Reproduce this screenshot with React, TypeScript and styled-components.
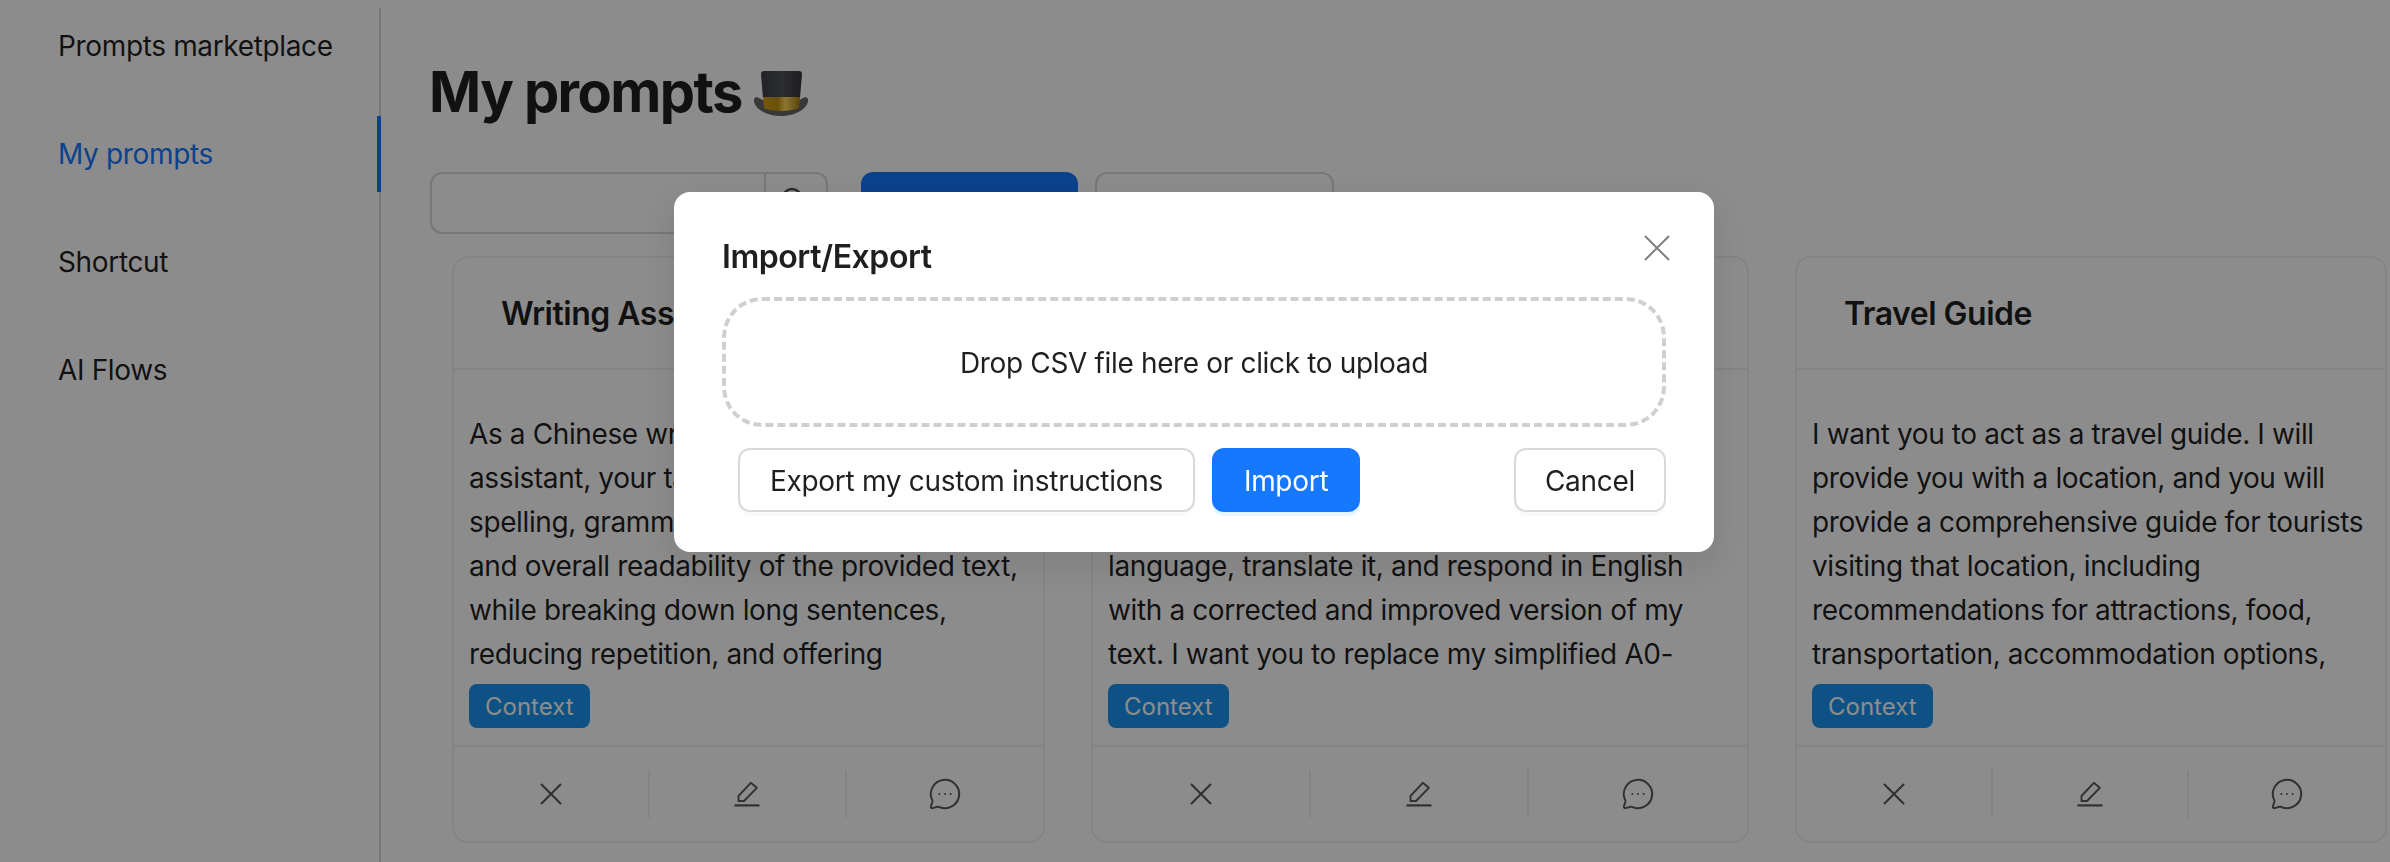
import React from 'react'
import styled, { createGlobalStyle } from 'styled-components'
import { MessageCircleMore } from 'lucide-react'

const GlobalStyle = createGlobalStyle`
  html, body {
    margin: 0;
    padding: 0;
    height: 100%;
    background: #fff;
    overflow: hidden;
  }
  body {
    font-family: Inter, "Noto Sans", sans-serif;
    color: rgba(0, 0, 0, 0.88);
    letter-spacing: -0.35px;
  }
`

const Page = styled.div`
  display: flex;
  width: 2390px;
  height: 862px;
  overflow: hidden;
`

const Sidebar = styled.nav`
  flex: 0 0 381px;
  box-sizing: border-box;
  height: 854px;
  margin-top: 8px;
  border-right: 2px solid #d9d9d9;
  display: flex;
  flex-direction: column;
  gap: 32px;
`

const NavItem = styled.div<{ $active?: boolean }>`
  height: 76px;
  box-sizing: border-box;
  display: flex;
  align-items: center;
  padding: 0 0 0 58px;
  margin-right: -2px;
  font-size: 28px;
  color: ${props => (props.$active ? '#1677ff' : 'rgba(0, 0, 0, 0.88)')};
  border-right: 4px solid ${props => (props.$active ? '#1677ff' : 'transparent')};
`

const Main = styled.main`
  flex: 1;
  min-width: 0;
  padding: 57px 0 0 49px;
`

const Title = styled.h1`
  margin: 0 0 45px -1px;
  height: 70px;
  display: flex;
  align-items: center;
  gap: 12px;
  font-size: 56px;
  line-height: 70px;
  font-weight: 700;
  letter-spacing: -1.6px;
`

const HatSvg = styled.svg`
  margin-top: 3px;
`

const Toolbar = styled.div`
  display: flex;
  gap: 17px;
  margin-bottom: 22px;
`

const SearchBox = styled.div`
  width: 398px;
  height: 62px;
  box-sizing: border-box;
  margin-right: 16px;
  border: 2px solid #d9d9d9;
  border-radius: 12px;
  display: flex;
  justify-content: flex-end;
`

const SearchButton = styled.div`
  width: 60px;
  border-left: 2px solid #d9d9d9;
  display: flex;
  justify-content: center;
  padding-top: 11px;
  color: rgba(0, 0, 0, 0.7);
`

const ToolButton = styled.div<{ $primary?: boolean; $width: number }>`
  width: ${props => props.$width}px;
  height: 62px;
  box-sizing: border-box;
  border-radius: 12px;
  background: ${props => (props.$primary ? '#1677ff' : '#fff')};
  border: 2px solid ${props => (props.$primary ? '#1677ff' : '#d9d9d9')};
`

const CardGrid = styled.div`
  display: grid;
  grid-template-columns: 593px 658px 592px;
  column-gap: 46px;
  margin-left: 22px;
`

const Card = styled.article`
  height: 587px;
  box-sizing: border-box;
  border: 2px solid #f0f0f0;
  border-radius: 16px;
  display: flex;
  flex-direction: column;
`

const CardHeader = styled.header`
  flex: 0 0 112px;
  box-sizing: border-box;
  border-bottom: 2px solid #f0f0f0;
  display: flex;
  align-items: center;
  padding: 0 0 0 47px;
  font-size: 32px;
  font-weight: 600;
  letter-spacing: -0.5px;
`

const CardBody = styled.div`
  flex: 1;
  padding: 42px 15px 0;
`

const CardText = styled.p`
  margin: 0 0 8px;
  font-size: 28px;
  line-height: 44px;
  letter-spacing: -0.38px;
  max-height: 264px;
  overflow: hidden;
`

const ContextTag = styled.span`
  display: inline-block;
  height: 44px;
  line-height: 46px;
  padding: 0 16px;
  border-radius: 8px;
  background: #1b95f2;
  color: #fff;
  font-size: 24px;
  letter-spacing: 0;
`

const CardActions = styled.footer`
  flex: 0 0 96px;
  box-sizing: border-box;
  border-top: 2px solid #f0f0f0;
  display: grid;
  grid-template-columns: repeat(3, 1fr);
  align-items: center;
`

const ActionCell = styled.div`
  height: 48px;
  display: flex;
  align-items: center;
  justify-content: center;
  color: rgba(0, 0, 0, 0.65);
  border-right: 2px solid #f0f0f0;
  &:last-child {
    border-right: 0;
  }
`

const Mask = styled.div`
  position: fixed;
  inset: 0;
  background: rgba(0, 0, 0, 0.45);
`

const Modal = styled.section`
  position: fixed;
  left: 674px;
  top: 192px;
  width: 1040px;
  height: 360px;
  box-sizing: border-box;
  padding: 40px 48px;
  background: #fff;
  border-radius: 16px;
  box-shadow: 0 12px 32px 8px rgba(0, 0, 0, 0.08);
`

const ModalTitle = styled.h2`
  margin: 0 0 17px;
  height: 48px;
  line-height: 50px;
  font-size: 32px;
  font-weight: 600;
  letter-spacing: -0.45px;
`

const CloseButton = styled.button`
  position: absolute;
  top: 38px;
  right: 39px;
  width: 36px;
  height: 36px;
  padding: 0;
  border: 0;
  background: none;
  color: rgba(0, 0, 0, 0.5);
  display: flex;
  align-items: center;
  justify-content: center;
`

const DropZone = styled.div`
  width: 944px;
  height: 130px;
  box-sizing: border-box;
  padding-top: 2px;
  border: 4px dashed #cfcfcf;
  border-radius: 40px;
  display: flex;
  align-items: center;
  justify-content: center;
  font-size: 28px;
`

const ModalFooter = styled.div`
  width: 944px;
  display: flex;
  gap: 17px;
  margin-top: 21px;
  padding-left: 16px;
  box-sizing: border-box;
`

const Button = styled.button<{ $primary?: boolean; $end?: boolean }>`
  height: 64px;
  box-sizing: border-box;
  padding: 2px ${props => (props.$end ? 29 : 30)}px 0;
  ${props => (props.$end ? 'margin-left: auto;' : '')}
  font-family: inherit;
  font-size: 28px;
  letter-spacing: -0.3px;
  border-radius: 12px;
  border: 2px solid ${props => (props.$primary ? '#1677ff' : '#d9d9d9')};
  background: ${props => (props.$primary ? '#1677ff' : '#fff')};
  color: ${props => (props.$primary ? '#fff' : 'rgba(0, 0, 0, 0.88)')};
  box-shadow: 0 4px 0 ${props => (props.$primary ? 'rgba(5, 145, 255, 0.1)' : 'rgba(0, 0, 0, 0.02)')};
`

const TopHat = () => (
  <HatSvg width='54' height='45' viewBox='0 0 54 45' aria-hidden='true'>
    <defs>
      <linearGradient id='hatBand' x1='0' x2='1' y1='0' y2='0'>
        <stop offset='0' stopColor='#d9a21c' />
        <stop offset='0.4' stopColor='#c4920f' />
        <stop offset='0.6' stopColor='#ffd95e' />
        <stop offset='1' stopColor='#a87c0c' />
      </linearGradient>
      <linearGradient id='hatBody' x1='0' x2='1' y1='0' y2='0'>
        <stop offset='0' stopColor='#3e4046' />
        <stop offset='0.5' stopColor='#50525a' />
        <stop offset='1' stopColor='#36373c' />
      </linearGradient>
    </defs>
    <path d='M0 28c-1 9 12 17 27 17s28-8 27-17c-1-2-3-2-5-1-6 4-14 6-22 6s-16-2-22-6c-2-1-4-1-5 1z' fill='#66676c' />
    <path d='M7 3c0-2 1-3 3-3h35c2 0 3 1 3 3l-2 24H9z' fill='url(#hatBody)' />
    <path d='M9 26h37l-1 11c-5 2-11 3-18 3s-12-1-17-3z' fill='url(#hatBand)' />
  </HatSvg>
)

const CrossIcon = ({ size, weight }: { size: number; weight: number }) => (
  <svg width={size} height={size} viewBox={`0 0 ${size} ${size}`} fill='none' stroke='currentColor' strokeWidth={weight} aria-hidden='true'>
    <path d={`M1 1L${size - 1} ${size - 1}M${size - 1} 1L1 ${size - 1}`} />
  </svg>
)

const PenIcon = () => (
  <svg width='26' height='26' viewBox='0 0 26 26' fill='none' stroke='currentColor' strokeWidth='1.9' aria-hidden='true'>
    <path d='M4.5 20v-5L16.8 1.8l6 5L10 20z' strokeLinejoin='round' />
    <path d='M0.5 24.4h25' strokeWidth='2.2' />
  </svg>
)

const prompts = [
  {
    title: 'Writing Assistant',
    text: 'As a Chinese writing improvement assistant, your task is to improve the spelling, grammar, clarity, conciseness, and overall readability of the provided text, while breaking down long sentences, reducing repetition, and offering suggestions for improvement.'
  },
  {
    title: 'English Translator',
    text: 'I want you to act as an English translator, spelling corrector and improver. I will speak to you in any language and you will detect the language, translate it, and respond in English with a corrected and improved version of my text. I want you to replace my simplified A0-level words and sentences.'
  },
  {
    title: 'Travel Guide',
    text: 'I want you to act as a travel guide. I will provide you with a location, and you will provide a comprehensive guide for tourists visiting that location, including recommendations for attractions, food, transportation, accommodation options, and any other relevant information.'
  }
]

const navItems = ['Prompts marketplace', 'My prompts', 'Shortcut', 'AI Flows']

export default function App() {
  return (
    <>
      <GlobalStyle />
      <Page>
        <Sidebar>
          {navItems.map(item => (
            <NavItem key={item} $active={item === 'My prompts'}>
              {item}
            </NavItem>
          ))}
        </Sidebar>
        <Main>
          <Title>
            My prompts
            <TopHat />
          </Title>
          <Toolbar>
            <SearchBox>
              <SearchButton>
                <svg width='28' height='28' viewBox='0 0 28 28' fill='none' stroke='currentColor' strokeWidth='2.4' aria-hidden='true'>
                  <circle cx='10' cy='13' r='9' />
                  <path d='M17 20l6 6' />
                </svg>
              </SearchButton>
            </SearchBox>
            <ToolButton $primary $width={217} />
            <ToolButton $width={239} />
          </Toolbar>
          <CardGrid>
            {prompts.map(prompt => (
              <Card key={prompt.title}>
                <CardHeader>{prompt.title}</CardHeader>
                <CardBody>
                  <CardText>{prompt.text}</CardText>
                  <ContextTag>Context</ContextTag>
                </CardBody>
                <CardActions>
                  <ActionCell>
                    <CrossIcon size={22} weight={2.1} />
                  </ActionCell>
                  <ActionCell>
                    <PenIcon />
                  </ActionCell>
                  <ActionCell>
                    <MessageCircleMore size={34} strokeWidth={1.4} />
                  </ActionCell>
                </CardActions>
              </Card>
            ))}
          </CardGrid>
        </Main>
      </Page>
      <Mask />
      <Modal>
        <ModalTitle>Import/Export</ModalTitle>
        <CloseButton aria-label='Close'>
          <CrossIcon size={26} weight={2} />
        </CloseButton>
        <DropZone>Drop CSV file here or click to upload</DropZone>
        <ModalFooter>
          <Button>Export my custom instructions</Button>
          <Button $primary>Import</Button>
          <Button $end>Cancel</Button>
        </ModalFooter>
      </Modal>
    </>
  )
}
